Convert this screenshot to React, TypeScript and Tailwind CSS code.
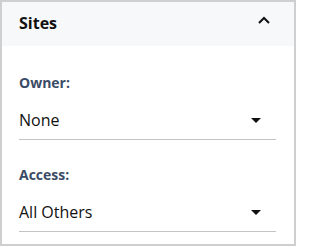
const FIELDS = [
  { label: 'Owner:', value: 'None' },
  { label: 'Access:', value: 'All Others' },
]

function CaretDown() {
  return (
    <svg width="10" height="5" viewBox="0 0 10 5" aria-hidden>
      <path d="M0 0h10L5 5z" fill="#111" />
    </svg>
  )
}

function ChevronUp() {
  return (
    <svg width="12" height="8" viewBox="0 0 12 8" aria-hidden>
      <path d="M1 7l5-5 5 5" fill="none" stroke="#111" strokeWidth="2" />
    </svg>
  )
}

export default function App() {
  return (
    <div
      className="flex h-[246px] w-[296px] flex-col border-2 border-[#cfcfcf] bg-white text-[#111]"
      style={{ fontFamily: '"Open Sans", "Liberation Sans", sans-serif' }}
    >
      <div className="flex h-[44px] items-start justify-between bg-[#f7f8fa] pl-[17px] pr-[24px] pt-[9px]">
        <span className="text-base font-bold leading-6">Sites</span>
        <span className="mt-[5px] flex">
          <ChevronUp />
        </span>
      </div>
      <div className="flex flex-col gap-[25px] pl-[17px] pr-[18px] pt-[27px]">
        {FIELDS.map((f) => (
          <div key={f.label} className="flex flex-col gap-[15px]">
            <span className="text-sm font-bold leading-5 text-[#3b4b66]">{f.label}</span>
            <button
              type="button"
              className="flex items-center justify-between border-b border-[#c4c4c4] pb-[7px] pr-[15px] text-left text-base leading-6"
            >
              <span>{f.value}</span>
              <CaretDown />
            </button>
          </div>
        ))}
      </div>
    </div>
  )
}
